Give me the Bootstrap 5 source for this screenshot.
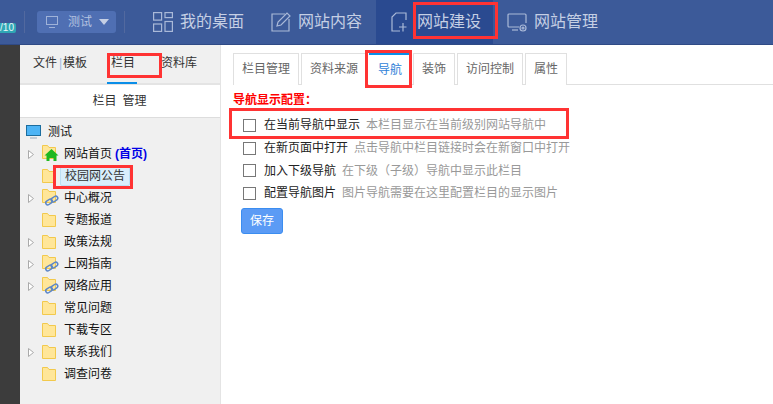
<!DOCTYPE html>
<html lang="zh">
<head>
<meta charset="UTF-8">
<title>网站建设</title>
<link rel="stylesheet" href="https://cdn.jsdelivr.net/npm/bootstrap@5.3.0/dist/css/bootstrap.min.css">
<style>
    html, body { height: 404px; overflow: hidden; }
    body { font-family: "Liberation Sans", "Noto Sans CJK SC", sans-serif; font-size: 12px; color: #333; background: #fff; }
    .page-wrap { width: 773px; height: 404px; overflow: hidden; }

    /* top bar */
    .top-bar { height: 45px; background: #3c5a99; border-bottom: 1px solid #2f4a85; color: #c5cfe4; padding: 0; flex-wrap: nowrap; justify-content: flex-start; }
    .ver-tag { width: 16px; height: 10px; margin-top: 11px; padding-right: 2px; background: #2fa7b5; color: #e8f6f8; font-size: 10px; line-height: 10px; border-radius: 0 2px 2px 0; text-align: right; overflow: hidden; }
    .bar-sep { width: 1px; height: 22px; background: #52699f; }
    .site-pick { width: 79px; height: 22px; background: #4f6fb3; border-radius: 3px; gap: 9px; padding-left: 8px; font-size: 12px; color: #b4c2e0; }
    .site-caret { width: 0; height: 0; border-left: 5px solid transparent; border-right: 5px solid transparent; border-top: 6px solid #c5cfe4; margin-left: -2px; }
    .top-item { height: 44px; gap: 7px; font-size: 16px; color: #c5cfe4; line-height: 44px; white-space: nowrap; }
    .top-item.first { margin-right: 27px; }
    .top-item.on { background: #2a4a90; width: 117px; padding-left: 15px; gap: 10px; margin-left: 14px; margin-right: 14px; }

    /* left side */
    .left-strip { width: 20px; flex: none; background: #3c3c3c; }
    .side-col { width: 201px; flex: none; background: #f0f0f0; border-right: 1px solid #e4e4e4; }
    .side-tabs { height: 40px; border-bottom: 2px solid #e4e4e4; position: relative; font-size: 12px; color: #333; }
    .side-tabs span { position: absolute; top: 10px; line-height: 16px; }
    .side-tabs .tab-mark { position: absolute; left: 87px; top: 37px; width: 30px; height: 2px; background: #0a8ee8; }
    .side-title { height: 33px; background: #fff; border-bottom: 1px solid #ddd; text-align: center; line-height: 33px; font-size: 12px; color: #333; padding-right: 1px; }
    .tree-list { padding: 3px 0 0 5px; margin: 0; list-style: none; }
    .tree-row { height: 22px; line-height: 22px; color: #111; white-space: nowrap; }
    .tree-arrow { width: 6px; height: 9px; margin: 0 8px 0 3px; flex: none; }
    .tree-gap { width: 17px; flex: none; }
    .tree-icon { width: 14px; height: 14px; flex: none; margin-right: 8px; }
    .tree-icon.raised { margin-top: -4px; }
    .tree-screen { width: 15px; height: 14px; flex: none; margin: 0 7px 0 1px; }
    .tree-row b { color: #0000e6; font-weight: 700; margin-left: 3px; }
    .tree-pick { background: #d9eefb; border: 1px solid #bcdff3; border-radius: 2px; padding: 0 4px; line-height: 18px; margin-left: -4px; color: #333; }

    /* main */
    .main-col { flex: 1; padding: 8px 0 0 12px; min-width: 0; }
    .main-tabs { border-bottom: 1px solid #e0e0e0; height: 32px; gap: 2px; flex-wrap: nowrap; }
    .main-tabs .nav-link { height: 32px; padding: 0 8px; line-height: 30px; font-size: 12px; color: #666; border: 1px solid #e0e0e0; border-bottom: 0; border-radius: 0; background: #fff; margin: 0; }
    .main-tabs .nav-link.active { color: #2f7fd8; border: 0; border-top: 2px solid #0a8ee8; width: 42px; padding: 0 0 0 9px; line-height: 30px; }
    .cfg-title { color: #f00; font-weight: 700; font-size: 12px; line-height: 14px; margin: 8px 0 7px; }
    .cfg-row { height: 22.7px; padding-left: 10px; gap: 8px; white-space: nowrap; color: #222; }
    .cfg-row .form-check-input { width: 13px; height: 13px; margin: 0; border: 1px solid #777; border-radius: 0; flex: none; }
    .cfg-row .form-check-label { line-height: 16px; }
    .cfg-row small { color: #999; font-size: 12px; margin-left: 6px; }
    .save-btn { width: 42px; height: 26px; margin: 3px 0 0 8px; padding: 0; font-size: 12px; background: #5b9bf5; border: 1px solid #3b8df0; border-radius: 3px; }

    /* red marks drawn over the screenshot */
    .red-mark { position: absolute; border: 3px solid #f33; pointer-events: none; }
    .mark-a { left: 413px; top: 2px; width: 85px; height: 37px; }
    .mark-b { left: 107px; top: 53px; width: 55px; height: 25px; }
    .mark-c { left: 365px; top: 50px; width: 47px; height: 38px; }
    .mark-d { left: 229px; top: 108px; width: 340px; height: 31px; }
    .mark-e { left: 53px; top: 165px; width: 80px; height: 24px; }
</style>
</head>
<body>
<div class="page-wrap position-relative d-flex flex-column">

    <nav class="navbar top-bar align-items-center">
        <div class="ver-tag">/10</div>
        <div class="bar-sep ms-2 me-2"></div>
        <div class="site-pick d-flex align-items-center ms-1 me-2">
            <svg width="14" height="14" viewBox="0 0 14 14" fill="none" stroke="#9fb2d8"><rect x="1.5" y="1.5" width="11" height="8"/><path d="M4 12.5h6"/></svg>
            <span>测试</span>
            <span class="site-caret"></span>
        </div>
        <div class="bar-sep me-4"></div>
        <div class="top-item first d-flex align-items-center ms-1">
            <svg width="20" height="20" viewBox="0 0 20 20" fill="none" stroke="#aab9d8" stroke-width="1.2"><rect x=".6" y=".6" width="8" height="7.500"/><rect x="12" y=".6" width="7.400" height="5"/><rect x=".6" y="12" width="8" height="7.400"/><rect x="12" y="9.500" width="7.400" height="9.900"/></svg>
            <span>我的桌面</span>
        </div>
        <div class="top-item d-flex align-items-center">
            <svg width="20" height="20" viewBox="0 0 20 20" fill="none" stroke="#aab9d8" stroke-width="1.2"><path d="M14 2H1v17h17V7"/><path d="M6 14l1-4 9-9 3 3-9 9z"/></svg>
            <span>网站内容</span>
        </div>
        <div class="top-item on d-flex align-items-center">
            <svg width="16" height="20" viewBox="0 0 16 20" fill="none" stroke="#aab9d8" stroke-width="1.2"><path d="M15 8V1H5L1 5v14h8"/><path d="M8 15h7.500M12 11v8.500"/></svg>
            <span>网站建设</span>
        </div>
        <div class="top-item d-flex align-items-center">
            <svg width="20" height="20" viewBox="0 0 20 20" fill="none" stroke="#aab9d8" stroke-width="1.2"><path d="M12 15H2a1 1 0 0 1-1-1V3a1 1 0 0 1 1-1h16a1 1 0 0 1 1 1v8"/><path d="M5 18h6"/><circle cx="16" cy="16" r="3"/><circle cx="16" cy="16" r="1"/></svg>
            <span>网站管理</span>
        </div>
    </nav>

    <div class="d-flex flex-grow-1">
        <div class="left-strip"></div>

        <div class="side-col">
            <div class="side-tabs">
                <span style="left:13px">文件</span>
                <span style="left:39px;color:#9dbbe0">|</span>
                <span style="left:43px">模板</span>
                <span style="left:91px">栏目</span>
                <span style="left:141px">资料库</span>
                <div class="tab-mark"></div>
            </div>
            <div class="side-title">栏目&ensp;管理</div>
            <ul class="tree-list" id="tree"></ul>
        </div>

        <div class="main-col">
            <ul class="nav main-tabs">
                <li class="nav-item"><a class="nav-link" href="#">栏目管理</a></li>
                <li class="nav-item"><a class="nav-link" href="#">资料来源</a></li>
                <li class="nav-item"><a class="nav-link active" href="#">导航</a></li>
                <li class="nav-item"><a class="nav-link" href="#">装饰</a></li>
                <li class="nav-item"><a class="nav-link" href="#">访问控制</a></li>
                <li class="nav-item"><a class="nav-link" href="#">属性</a></li>
            </ul>
            <div class="cfg-title">导航显示配置：</div>
            <div class="cfg-row d-flex align-items-center"><input class="form-check-input" type="checkbox"><label class="form-check-label">在当前导航中显示<small>本栏目显示在当前级别网站导航中</small></label></div>
            <div class="cfg-row d-flex align-items-center"><input class="form-check-input" type="checkbox"><label class="form-check-label">在新页面中打开<small>点击导航中栏目链接时会在新窗口中打开</small></label></div>
            <div class="cfg-row d-flex align-items-center"><input class="form-check-input" type="checkbox"><label class="form-check-label">加入下级导航<small>在下级（子级）导航中显示此栏目</small></label></div>
            <div class="cfg-row d-flex align-items-center"><input class="form-check-input" type="checkbox"><label class="form-check-label">配置导航图片<small>图片导航需要在这里配置栏目的显示图片</small></label></div>
            <button type="button" class="btn btn-primary save-btn">保存</button>
        </div>
    </div>

    <div class="red-mark mark-a"></div>
    <div class="red-mark mark-b"></div>
    <div class="red-mark mark-c"></div>
    <div class="red-mark mark-d"></div>
    <div class="red-mark mark-e"></div>
</div>

<script>
    // folder tree rows: name, has arrow, overlay icon
    const filas = [
        ["网站首页", true, "home"],
        ["校园网公告", false, "", "pick"],
        ["中心概况", true, "link"],
        ["专题报道", false, ""],
        ["政策法规", true, ""],
        ["上网指南", true, "link"],
        ["网络应用", true, "link"],
        ["常见问题", false, ""],
        ["下载专区", false, ""],
        ["联系我们", true, ""],
        ["调查问卷", false, ""]
    ];
    const flecha = `<svg class="tree-arrow" viewBox="0 0 6 9" fill="#fff" stroke="#aaa"><path d="M.5.5l5 4-5 4z"/></svg>`;
    const carpeta = (extra) => `<svg class="tree-icon ${extra ? "raised" : ""}" viewBox="0 0 14 14" style="overflow:visible"><path d="M.5 .5h5l1.500 2h6.500v11H.5z" fill="#ffe699" stroke="#f2c94c"/>${extra}</svg>`;
    const extras = {
        home: `<path d="M9.500 4L2.500 10.500h2v5.500h3v-3h4v3h3v-5.500h2z" fill="#1fb81f"/>`,
        link: `<g fill="none" stroke="#5b86c8" stroke-width="1.500"><rect x="3.500" y="11" width="7" height="4" rx="2" transform="rotate(-35 7 13)"/><rect x="9" y="8" width="7" height="4" rx="2" transform="rotate(-35 12.500 10)"/></g>`
    };
    let html = `<li class="tree-row d-flex align-items-center"><svg class="tree-screen" viewBox="0 0 15 14"><rect x=".5" y=".5" width="14" height="10" fill="#4db4f5" stroke="#1c6d9e"/><path d="M4 13h7" stroke="#9ab"/></svg><span>测试</span></li>`;
    filas.forEach(f => {
        const nombre = f[0] === "网站首页" ? `${f[0]}<b>(首页)</b>` : f[0];
        html += `<li class="tree-row d-flex align-items-center">${f[1] ? flecha : `<span class="tree-gap"></span>`}${carpeta(extras[f[2]] || "")}<span class="${f[3] ? "tree-pick" : ""}">${nombre}</span></li>`;
    });
    document.getElementById("tree").innerHTML = html;
</script>
<script src="https://cdn.jsdelivr.net/npm/bootstrap@5.3.0/dist/js/bootstrap.bundle.min.js"></script>
</body>
</html>
